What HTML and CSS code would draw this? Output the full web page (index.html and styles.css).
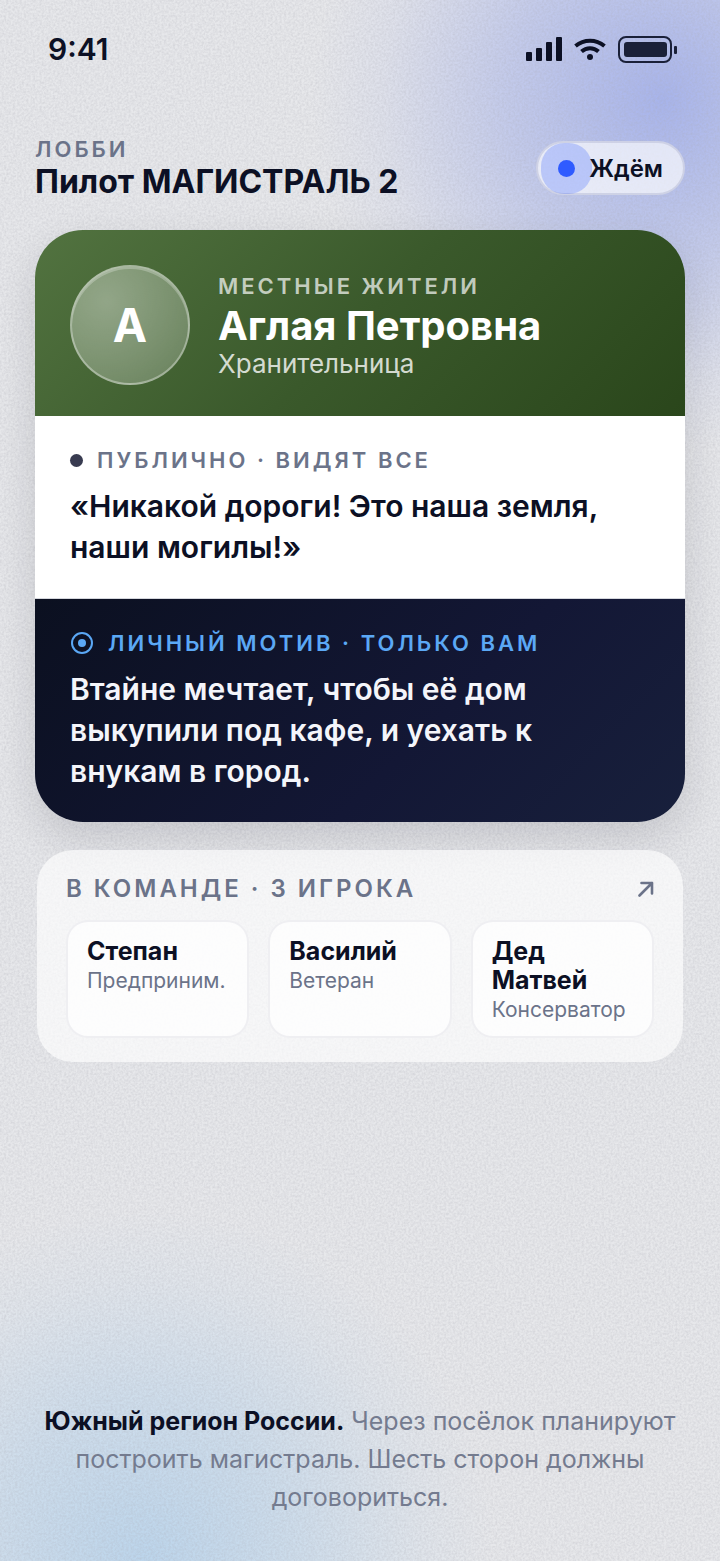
FILE: index.html
```
<!DOCTYPE html>
<html lang="ru">
<head>
  <meta charset="UTF-8">
  <meta name="viewport" content="width=device-width, initial-scale=1">
  <title>Пилот МАГИСТРАЛЬ 2</title>
  <link rel="stylesheet" href="styles.css">
</head>
<body>

<!-- paper grain behind everything -->
<svg class="grain" aria-hidden="true">
  <filter id="noise">
    <feTurbulence type="fractalNoise" baseFrequency="0.45" numOctaves="2" seed="4"/>
    <feColorMatrix values="0 0 0 0 0.4  0 0 0 0 0.4  0 0 0 0 0.45  0.5 0 0 0 -0.15"/>
  </filter>
  <rect width="100%" height="100%" filter="url(#noise)"/>
</svg>

<div class="statusbar">
  <span class="time">9:41</span>
  <div class="system-icons">
    <svg width="36" height="24" viewBox="0 0 36 24">
      <rect x="0" y="15" width="6" height="9" rx="1"/>
      <rect x="10" y="11" width="6" height="13" rx="1"/>
      <rect x="20" y="5" width="6" height="19" rx="1"/>
      <rect x="30" y="0" width="6" height="24" rx="1"/>
    </svg>
    <svg width="32" height="24" viewBox="0 0 32 24">
      <path d="M1.500 9C10 2 22 2 30.500 9M7.500 14.500C12.500 10 19.500 10 24.500 14.500" fill="none" stroke="#0c1024" stroke-width="4"/>
      <circle cx="16" cy="20" r="3"/>
    </svg>
    <svg width="59" height="27" viewBox="0 0 59 27">
      <rect x="1" y="1" width="52" height="25" rx="7" fill="none" stroke="#1a2038" stroke-width="2"/>
      <rect x="6" y="6" width="43" height="15" rx="3" fill="#1a2038"/>
      <rect x="56" y="10" width="3" height="8" rx="1" fill="#1a2038"/>
    </svg>
  </div>
</div>

<header class="header">
  <div>
    <div class="label">Лобби</div>
    <h1>Пилот МАГИСТРАЛЬ 2</h1>
  </div>
  <div class="status" role="status"><i class="status-dot"></i><span>Ждём</span></div>
</header>

<main>
  <article class="role-card">
    <section class="hero">
      <div class="avatar">А</div>
      <div>
        <div class="label">Местные жители</div>
        <h2>Аглая Петровна</h2>
        <p>Хранительница</p>
      </div>
    </section>
    <section class="public">
      <div class="label"><i class="dot"></i>Публично · видят все</div>
      <p>«Никакой дороги! Это наша земля, наши могилы!»</p>
    </section>
    <section class="secret">
      <div class="label">
        <svg width="24" height="24" viewBox="0 0 24 24">
          <circle cx="12" cy="12" r="10" fill="none" stroke="#5ba8f5" stroke-width="2"/>
          <circle cx="12" cy="12" r="4" fill="#5ba8f5"/>
        </svg>
        Личный мотив · только вам
      </div>
      <p>Втайне мечтает, чтобы её дом выкупили под кафе, и уехать к внукам в город.</p>
    </section>
  </article>

  <section class="team">
    <div class="team-head">
      <h3>В команде · 3 игрока</h3>
      <button type="button" aria-label="Открыть команду">
        <svg width="16" height="16" viewBox="0 0 16 16" fill="none" stroke="#6b7389" stroke-width="2.600" stroke-linecap="round" stroke-linejoin="round">
          <path d="M1.500 14.500L14 2M3.500 2H14V12.500"/>
        </svg>
      </button>
    </div>
    <ul class="players">
      <li><b>Степан</b><span>Предприним.</span></li>
      <li><b>Василий</b><span>Ветеран</span></li>
      <li><b>Дед Матвей</b><span>Консерватор</span></li>
    </ul>
  </section>
</main>

<footer class="footer">
  <strong>Южный регион России.</strong> Через посёлок планируют построить магистраль. Шесть сторон должны договориться.
</footer>

</body>
</html>
```

FILE: styles.css
```
* {
  box-sizing: border-box;
}

body {
  margin: 0;
  min-height: 100vh;
  display: flex;
  flex-direction: column;
  position: relative;
  isolation: isolate;
  font-family: Inter, 'Liberation Sans', sans-serif;
  color: #0c1024;
  background:
    radial-gradient(circle 350px at 92% 100px, rgba(146, 162, 235, 0.75), rgba(146, 162, 235, 0.42) 45%, rgba(146, 162, 235, 0.1) 80%, rgba(146, 162, 235, 0)),
    radial-gradient(circle 350px at 20% 100%, rgba(165, 203, 236, 0.65), rgba(165, 203, 236, 0.38) 45%, rgba(165, 203, 236, 0.1) 80%, rgba(165, 203, 236, 0)),
    #e7e8eb;
}

h1, h2, h3, p, ul {
  margin: 0;
  padding: 0;
}

.grain {
  position: absolute;
  inset: 0;
  width: 100%;
  height: 100%;
  z-index: -1;
}

.label {
  font-size: 22px;
  line-height: 28px;
  font-weight: 600;
  letter-spacing: 3px;
  text-transform: uppercase;
  color: #6b7389;
}

/* top */
.statusbar {
  display: flex;
  justify-content: space-between;
  align-items: center;
  padding: 30px 43px 0 48px;
}

.time {
  font-size: 30px;
  line-height: 38px;
  font-weight: 600;
}

.system-icons {
  display: flex;
  align-items: center;
  gap: 12px;
  fill: #0c1024;
}

.header {
  display: flex;
  justify-content: space-between;
  align-items: center;
  padding: 67px 35px 29px;
}

.header h1 {
  font-size: 32px;
  line-height: 38px;
  font-weight: 700;
}

.status {
  display: flex;
  align-items: center;
  gap: 14px;
  height: 54px;
  padding: 0 20px;
  border: 2px solid rgba(200, 204, 225, 0.8);
  border-radius: 27px;
  background: rgba(255, 255, 255, 0.65);
  font-size: 24px;
  font-weight: 600;
}

.status-dot {
  width: 17px;
  height: 17px;
  border-radius: 50%;
  background: #2f5bff;
  box-shadow: 0 0 0 17px rgba(47, 91, 255, 0.25);
}

.status span {
  position: relative;
}

/* role card */
.role-card {
  margin: 0 35px;
  border-radius: 48px;
  overflow: hidden;
  box-shadow: 0 16px 40px rgba(20, 22, 35, 0.14);
}

.hero {
  display: flex;
  align-items: center;
  gap: 28px;
  padding: 35px 35px 31px;
  color: #fff;
  background: linear-gradient(135deg, #527340, #3a592b 50%, #2a461b);
}

.avatar {
  width: 120px;
  height: 120px;
  display: grid;
  place-items: center;
  border: 2px solid rgba(255, 255, 255, 0.35);
  border-radius: 50%;
  background: radial-gradient(circle at 30% 30%, rgba(255, 255, 255, 0.4), rgba(255, 255, 255, 0.2));
  box-shadow: inset 0 2px 0 rgba(255, 255, 255, 0.25);
  font-size: 46px;
  font-weight: 700;
}

.hero .label {
  margin-bottom: 2px;
  color: rgba(255, 255, 255, 0.7);
}

.hero h2 {
  font-size: 40px;
  line-height: 48px;
  font-weight: 700;
}

.hero p {
  font-size: 26px;
  line-height: 28px;
  color: rgba(255, 255, 255, 0.8);
}

.public,
.secret {
  padding: 30px 35px;
}

.public {
  background: #fff;
  border-bottom: 1px solid #d5d7dd;
}

.secret {
  color: #f4f5fa;
  background: linear-gradient(135deg, #0b1020, #131735 60%, #18203c);
}

.public .label,
.secret .label {
  display: flex;
  align-items: center;
  gap: 14px;
  margin-bottom: 12px;
}

.secret .label {
  color: #5ba8f5;
}

.dot {
  width: 13px;
  height: 13px;
  border-radius: 50%;
  background: #383b50;
}

.public p,
.secret p {
  font-size: 30px;
  line-height: 41px;
  font-weight: 600;
}

/* team */
.team {
  margin: 28px 37px 0;
  padding: 24px 29px;
  border-radius: 36px;
  background: rgba(255, 255, 255, 0.65);
}

.team-head {
  display: flex;
  justify-content: space-between;
  align-items: center;
  margin-bottom: 16px;
}

.team-head h3 {
  font-size: 24px;
  line-height: 30px;
  font-weight: 600;
  letter-spacing: 3px;
  text-transform: uppercase;
  color: #6b7389;
}

.team-head button {
  display: flex;
  padding: 0;
  border: none;
  background: none;
  cursor: pointer;
}

.players {
  display: grid;
  grid-template-columns: repeat(3, 1fr);
  gap: 19px;
  list-style: none;
}

.players li {
  padding: 15px 19px 12px;
  border: 2px solid rgba(225, 226, 232, 0.5);
  border-radius: 22px;
  background: rgba(255, 255, 255, 0.75);
  line-height: 29px;
}

.players b {
  display: block;
  font-size: 25px;
  font-weight: 700;
}

.players span {
  display: block;
  font-size: 21px;
  color: #6b7389;
}

.footer {
  margin-top: auto;
  padding: 40px 35px 45px;
  font-size: 25px;
  line-height: 38px;
  text-align: center;
  color: #747b8f;
}

.footer strong {
  font-weight: 700;
  color: #0c1024;
}
```
